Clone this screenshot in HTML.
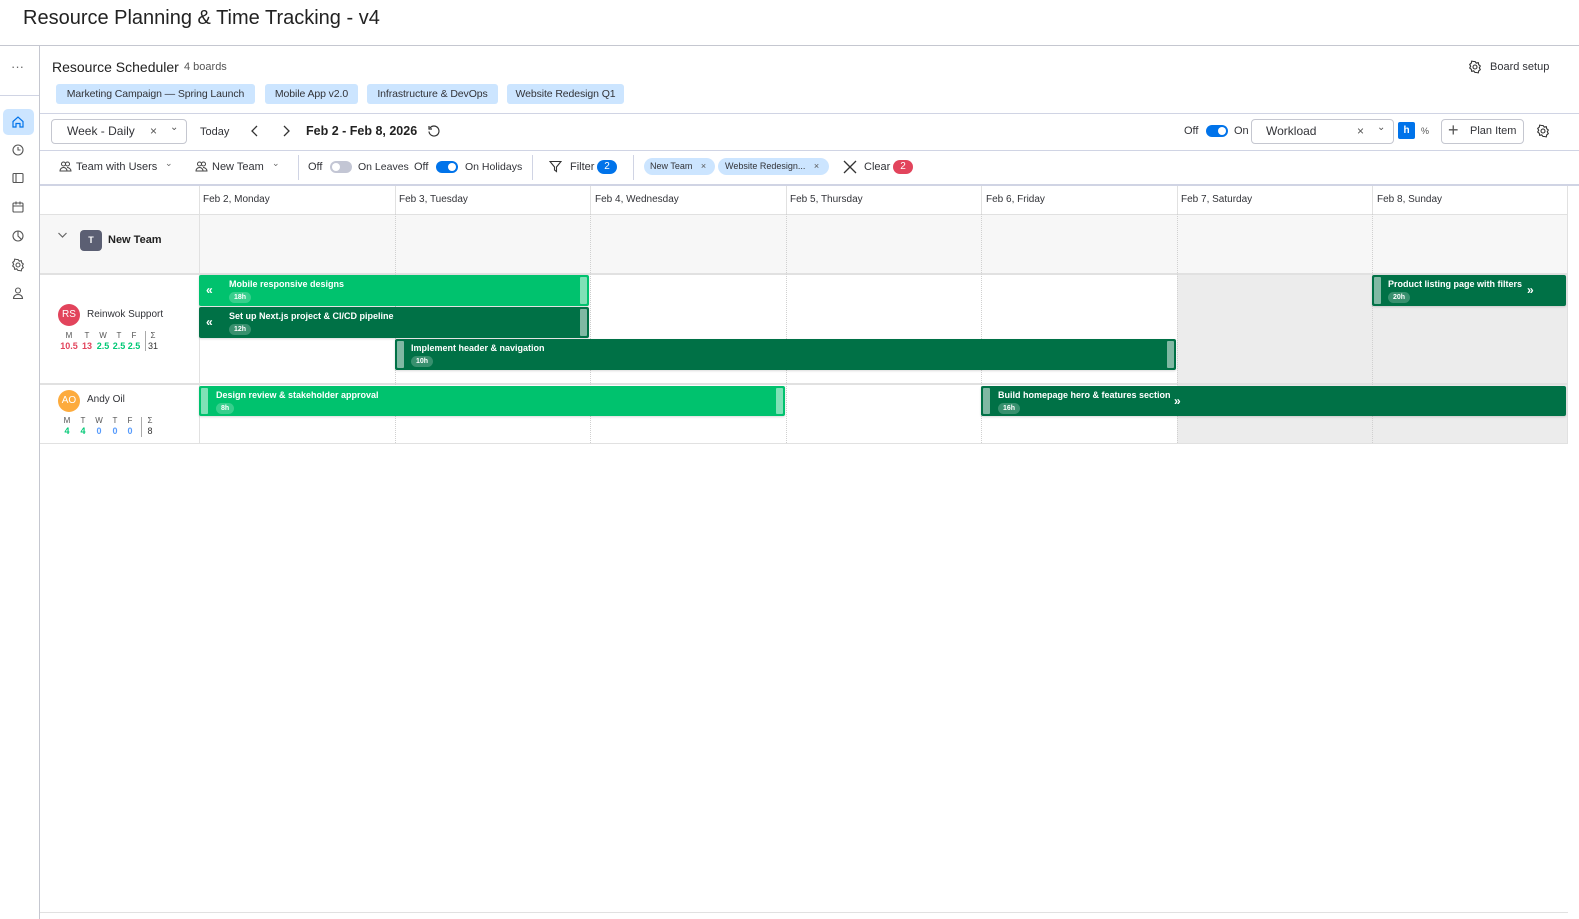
<!DOCTYPE html>
<html><head><meta charset="utf-8"><style>
*{box-sizing:border-box;margin:0;padding:0}
body{width:1579px;height:919px;position:relative;background:#fff;font-family:"Liberation Sans",sans-serif;color:#323338;overflow:hidden;font-size:12px}
.a{position:absolute;white-space:nowrap}
.chip{position:absolute;top:84px;height:20px;background:#cce5ff;border-radius:3px;font-size:10.5px;line-height:20px;padding:0 5px;color:#323338;white-space:nowrap;overflow:hidden;text-align:center;letter-spacing:-0.1px}
.hl{position:absolute;height:1px;background:#d0d4e4}
.vl{position:absolute;width:1px;background:#d0d4e4}
.dv{position:absolute;width:0;border-left:1px dotted #d0d0d0}
.bar{position:absolute;border-radius:2px;color:#fff;font-weight:bold;font-size:9px;box-shadow:0 1px 2px rgba(0,0,0,.15)}
.bar .t{position:absolute;top:4px}
.bar .h{position:absolute;top:17px;background:rgba(255,255,255,.22);border-radius:7px;font-size:7px;padding:1px 5px;line-height:9px}
.hd{position:absolute;right:2px;top:2px;bottom:2px;width:7px;background:rgba(255,255,255,.5);border-radius:1px}
.hdl{position:absolute;left:2px;top:2px;bottom:2px;width:7px;background:rgba(255,255,255,.5);border-radius:1px}
.tog{position:absolute;width:22px;height:12px;border-radius:6px}
.tog i{position:absolute;top:2px;width:8px;height:8px;border-radius:50%;background:#fff}
svg{position:absolute}
.c{position:absolute;width:20px;margin-left:-10px;text-align:center;white-space:nowrap}
</style></head><body>
<div class="a" style="left:23px;top:7px;font-size:20px;color:#222">Resource Planning &amp; Time Tracking - v4</div>
<div class="hl" style="left:0;top:45px;width:1579px;background:#c5c7d0"></div>
<div class="vl" style="left:39px;top:46px;height:873px;background:#c5c7d0"></div>
<div class="hl" style="left:0;top:95px;width:39px"></div>
<div class="a" style="left:11px;top:59px;font-size:13px;color:#666">···</div>
<div class="a" style="left:3px;top:109px;width:31px;height:26px;background:#cce5ff;border-radius:5px"></div>
<svg style="left:11px;top:115px" width="14" height="14" viewBox="0 0 14 14" fill="none" stroke="#0073ea" stroke-width="1.2"><path d="M2 6.5L7 2l5 4.5V12H9V8.5H5V12H2z"/></svg>
<svg style="left:11px;top:143px" width="14" height="14" viewBox="0 0 14 14" fill="none" stroke="#555" stroke-width="1.1"><circle cx="7" cy="7" r="5"/><path d="M7 4v3h2.5"/></svg>
<svg style="left:11px;top:171px" width="14" height="14" viewBox="0 0 14 14" fill="none" stroke="#555" stroke-width="1.1"><rect x="2" y="2.5" width="10" height="9" rx="1"/><path d="M5 2.5v9"/></svg>
<svg style="left:11px;top:200px" width="14" height="14" viewBox="0 0 14 14" fill="none" stroke="#555" stroke-width="1.1"><rect x="2" y="3" width="10" height="9" rx="1"/><path d="M2 6h10M5 1.5v3M9 1.5v3"/></svg>
<svg style="left:11px;top:229px" width="14" height="14" viewBox="0 0 14 14" fill="none" stroke="#555" stroke-width="1.1"><circle cx="7" cy="7" r="5"/><path d="M7 2v5l3.5 3.5"/></svg>
<svg style="left:11px;top:258px" width="14" height="14" viewBox="0 0 14 14" fill="none" stroke="#555" stroke-width="1.1"><circle cx="7" cy="7" r="2"/><path d="M7 1.5l1.3 1.6 2-.4.4 2 1.6 1.3-1 1.8 1 1.8-1.6 1.3-.4 2-2-.4L7 12.5l-1.3-1.6-2 .4-.4-2L1.7 8l1-1.8-1-1.8 1.6-1.3.4-2 2 .4z"/></svg>
<svg style="left:11px;top:286px" width="14" height="14" viewBox="0 0 14 14" fill="none" stroke="#555" stroke-width="1.1"><circle cx="7" cy="4.5" r="2.5"/><path d="M2.5 12.5c0-2.5 2-4 4.5-4s4.5 1.5 4.5 4z"/></svg>

<div class="a" style="left:52px;top:59px;font-size:14px;color:#222">Resource Scheduler</div>
<div class="a" style="left:184px;top:61px;font-size:11px;color:#555">4 boards</div>
<svg style="left:1468px;top:60px" width="14" height="14" viewBox="0 0 14 14" fill="none" stroke="#333" stroke-width="1.1"><circle cx="7" cy="7" r="2"/><path d="M7 1.5l1.3 1.6 2-.4.4 2 1.6 1.3-1 1.8 1 1.8-1.6 1.3-.4 2-2-.4L7 12.5l-1.3-1.6-2 .4-.4-2L1.7 8l1-1.8-1-1.8 1.6-1.3.4-2 2 .4z"/></svg>
<div class="a" style="left:1490px;top:61px;font-size:11px">Board setup</div>
<div class="chip" style="left:56px;width:199px">Marketing Campaign — Spring Launch</div>
<div class="chip" style="left:265px;width:93px">Mobile App v2.0</div>
<div class="chip" style="left:367px;width:131px">Infrastructure &amp; DevOps</div>
<div class="chip" style="left:507px;width:117px">Website Redesign Q1</div>
<div class="hl" style="left:40px;top:113px;width:1539px"></div>

<div class="a" style="left:51px;top:119px;width:136px;height:25px;border:1px solid #c5c7d0;border-radius:4px"></div>
<div class="a" style="left:67px;top:124px;font-size:12px">Week - Daily</div>
<div class="a" style="left:150px;top:124px;font-size:12px;color:#555">×</div>
<div class="a" style="left:170px;top:122px;font-size:10px;color:#555">⌄</div>
<div class="a" style="left:200px;top:126px;font-size:11px">Today</div>
<svg style="left:250px;top:124px" width="10" height="14" viewBox="0 0 10 14" fill="none" stroke="#333" stroke-width="1.3"><path d="M7 2L2 7l5 5"/></svg>
<svg style="left:281px;top:124px" width="10" height="14" viewBox="0 0 10 14" fill="none" stroke="#333" stroke-width="1.3"><path d="M3 2l5 5-5 5"/></svg>
<div class="a" style="left:306px;top:124px;font-size:12.5px;font-weight:bold;color:#222">Feb 2 - Feb 8, 2026</div>
<svg style="left:427px;top:124px" width="14" height="14" viewBox="0 0 14 14" fill="none" stroke="#333" stroke-width="1.2"><path d="M3 4A5 5 0 1 1 2 7.5"/><path d="M2 2v3h3"/></svg>

<div class="a" style="left:1184px;top:125px;font-size:11px">Off</div>
<div class="tog" style="left:1206px;top:125px;background:#0073ea"><i style="right:2px"></i></div>
<div class="a" style="left:1234px;top:125px;font-size:11px">On</div>
<div class="a" style="left:1251px;top:119px;width:143px;height:25px;border:1px solid #c5c7d0;border-radius:4px"></div>
<div class="a" style="left:1266px;top:124px;font-size:12px">Workload</div>
<div class="a" style="left:1357px;top:124px;font-size:12px;color:#555">×</div>
<div class="a" style="left:1377px;top:122px;font-size:10px;color:#555">⌄</div>
<div class="a" style="left:1398px;top:122px;width:17px;height:17px;background:#0073ea;border-radius:2px;color:#fff;font-weight:bold;font-size:10px;text-align:center;line-height:17px">h</div>
<div class="a" style="left:1421px;top:126px;font-size:9px;color:#555">%</div>
<div class="a" style="left:1441px;top:119px;width:83px;height:25px;border:1px solid #c5c7d0;border-radius:4px"></div>
<div class="a" style="left:1448px;top:120px;font-size:18px;color:#555;font-weight:300">+</div>
<div class="a" style="left:1470px;top:125px;font-size:11px">Plan Item</div>
<svg style="left:1536px;top:124px" width="14" height="14" viewBox="0 0 14 14" fill="none" stroke="#333" stroke-width="1.1"><circle cx="7" cy="7" r="2"/><path d="M7 1.5l1.3 1.6 2-.4.4 2 1.6 1.3-1 1.8 1 1.8-1.6 1.3-.4 2-2-.4L7 12.5l-1.3-1.6-2 .4-.4-2L1.7 8l1-1.8-1-1.8 1.6-1.3.4-2 2 .4z"/></svg>
<div class="hl" style="left:40px;top:150px;width:1539px"></div>

<svg style="left:59px;top:160px" width="13" height="13" viewBox="0 0 13 13" fill="none" stroke="#444" stroke-width="1"><circle cx="4.5" cy="4" r="2"/><circle cx="8.5" cy="4" r="2"/><path d="M1 11c0-2 1.5-3.5 3.5-3.5S8 9 8 11zM8 7.5c2 0 4 1.5 4 3.5H8"/></svg>
<div class="a" style="left:76px;top:161px;font-size:11px">Team with Users</div>
<div class="a" style="left:165px;top:158px;font-size:9px;color:#666">⌄</div>
<svg style="left:195px;top:160px" width="13" height="13" viewBox="0 0 13 13" fill="none" stroke="#444" stroke-width="1"><circle cx="4.5" cy="4" r="2"/><circle cx="8.5" cy="4" r="2"/><path d="M1 11c0-2 1.5-3.5 3.5-3.5S8 9 8 11zM8 7.5c2 0 4 1.5 4 3.5H8"/></svg>
<div class="a" style="left:212px;top:161px;font-size:11px">New Team</div>
<div class="a" style="left:272px;top:158px;font-size:9px;color:#666">⌄</div>
<div class="vl" style="left:298px;top:155px;height:25px"></div>
<div class="a" style="left:308px;top:161px;font-size:11px">Off</div>
<div class="tog" style="left:330px;top:161px;background:#c3c6d4"><i style="left:2px"></i></div>
<div class="a" style="left:358px;top:161px;font-size:10.5px">On Leaves</div>
<div class="a" style="left:414px;top:161px;font-size:11px">Off</div>
<div class="tog" style="left:436px;top:161px;background:#0073ea"><i style="right:2px"></i></div>
<div class="a" style="left:465px;top:161px;font-size:10.5px">On Holidays</div>
<div class="vl" style="left:532px;top:155px;height:25px"></div>
<svg style="left:549px;top:160px" width="13" height="13" viewBox="0 0 13 13" fill="none" stroke="#333" stroke-width="1.1"><path d="M1 1.5h11L7.5 7v4.5L5.5 10V7z"/></svg>
<div class="a" style="left:570px;top:161px;font-size:11px">Filter</div>
<div class="a" style="left:597px;top:160px;width:20px;height:14px;border-radius:7px;background:#0073ea;color:#fff;font-size:10px;text-align:center;line-height:14px">2</div>
<div class="vl" style="left:633px;top:155px;height:25px"></div>
<div class="a" style="left:644px;top:158px;width:71px;height:17px;border-radius:9px;background:#cce5ff;font-size:9px;line-height:17px;padding-left:6px">New Team <span style="margin-left:6px;color:#555">×</span></div>
<div class="a" style="left:718px;top:158px;width:111px;height:17px;border-radius:9px;background:#cce5ff;font-size:9px;line-height:17px;padding-left:7px">Website Redesign... <span style="margin-left:6px;color:#555">×</span></div>
<svg style="left:843px;top:160px" width="14" height="14" viewBox="0 0 14 14" stroke="#333" stroke-width="1.3"><path d="M1 1l12 12M13 1L1 13"/></svg>
<div class="a" style="left:864px;top:161px;font-size:11px">Clear</div>
<div class="a" style="left:893px;top:160px;width:20px;height:14px;border-radius:7px;background:#e2445c;color:#fff;font-size:10px;text-align:center;line-height:14px">2</div>

<!-- grid -->
<div class="hl" style="left:40px;top:184px;width:1539px;height:2px;background:#d0d4e4"></div>
<div class="a" style="left:40px;top:214px;width:1528px;height:59px;background:#f7f7f7"></div>
<div class="a" style="left:1177px;top:273px;width:391px;height:170px;background:#ececec"></div>
<div class="hl" style="left:40px;top:214px;width:1528px;background:#e1e1e1"></div>
<div class="hl" style="left:40px;top:273px;width:1528px;height:2px;background:#e1e1e1"></div>
<div class="hl" style="left:40px;top:383px;width:1528px;height:2px;background:#e1e1e1"></div>
<div class="hl" style="left:40px;top:443px;width:1528px;height:1px;background:#e1e1e1"></div>
<div class="vl" style="left:199px;top:186px;height:257px;background:#e1e1e1"></div>
<div class="vl" style="left:395px;top:186px;height:28px;background:#e1e1e1"></div>
<div class="vl" style="left:590px;top:186px;height:28px;background:#e1e1e1"></div>
<div class="vl" style="left:786px;top:186px;height:28px;background:#e1e1e1"></div>
<div class="vl" style="left:981px;top:186px;height:28px;background:#e1e1e1"></div>
<div class="vl" style="left:1177px;top:186px;height:28px;background:#e1e1e1"></div>
<div class="vl" style="left:1372px;top:186px;height:28px;background:#e1e1e1"></div>
<div class="vl" style="left:1567px;top:186px;height:258px;background:#e1e1e1"></div>
<div class="dv" style="left:395px;top:214px;height:229px"></div>
<div class="dv" style="left:590px;top:214px;height:229px"></div>
<div class="dv" style="left:786px;top:214px;height:229px"></div>
<div class="dv" style="left:981px;top:214px;height:229px"></div>
<div class="dv" style="left:1177px;top:214px;height:229px"></div>
<div class="dv" style="left:1372px;top:214px;height:229px"></div>
<div class="a" style="left:203px;top:194px;font-size:10px">Feb 2, Monday</div>
<div class="a" style="left:399px;top:194px;font-size:10px">Feb 3, Tuesday</div>
<div class="a" style="left:595px;top:194px;font-size:10px">Feb 4, Wednesday</div>
<div class="a" style="left:790px;top:194px;font-size:10px">Feb 5, Thursday</div>
<div class="a" style="left:986px;top:194px;font-size:10px">Feb 6, Friday</div>
<div class="a" style="left:1181px;top:194px;font-size:10px">Feb 7, Saturday</div>
<div class="a" style="left:1377px;top:194px;font-size:10px">Feb 8, Sunday</div>

<svg style="left:57px;top:231px" width="11" height="8" viewBox="0 0 11 8" fill="none" stroke="#666" stroke-width="1.2"><path d="M1.5 2l4 4 4-4"/></svg>
<div class="a" style="left:80px;top:230px;width:22px;height:21px;border-radius:4px;background:#5b5f73;color:#fff;font-size:9px;font-weight:bold;text-align:center;line-height:21px">T</div>
<div class="a" style="left:108px;top:234px;font-size:11px;font-weight:bold;color:#222">New Team</div>

<div class="a" style="left:58px;top:304px;width:22px;height:22px;border-radius:50%;background:#e2445c;color:#fff;font-size:10px;text-align:center;line-height:22px">RS</div>
<div class="a" style="left:87px;top:309px;font-size:10px">Reinwok Support</div>
<div style="position:absolute;top:331px;font-size:8px;color:#555;left:0">
<span class="c" style="left:69px">M</span><span class="c" style="left:87px">T</span><span class="c" style="left:103px">W</span><span class="c" style="left:119px">T</span><span class="c" style="left:134px">F</span><span class="c" style="left:153px">Σ</span></div>
<div style="position:absolute;top:341px;font-size:9px;font-weight:bold;left:0">
<span class="c" style="left:69px;color:#e2445c">10.5</span><span class="c" style="left:87px;color:#e2445c">13</span><span class="c" style="left:103px;color:#00c875">2.5</span><span class="c" style="left:119px;color:#00c875">2.5</span><span class="c" style="left:134px;color:#00c875">2.5</span><span class="c" style="left:153px;color:#333;font-weight:normal">31</span></div>
<div class="vl" style="left:145px;top:331px;height:20px;background:#aaa"></div>

<div class="a" style="left:58px;top:390px;width:22px;height:22px;border-radius:50%;background:#fdab3d;color:#fff;font-size:10px;text-align:center;line-height:22px">AO</div>
<div class="a" style="left:87px;top:394px;font-size:10px">Andy Oil</div>
<div style="position:absolute;top:416px;font-size:8px;color:#555;left:0">
<span class="c" style="left:67px">M</span><span class="c" style="left:83px">T</span><span class="c" style="left:99px">W</span><span class="c" style="left:115px">T</span><span class="c" style="left:130px">F</span><span class="c" style="left:150px">Σ</span></div>
<div style="position:absolute;top:426px;font-size:9px;font-weight:bold;left:0">
<span class="c" style="left:67px;color:#00c875">4</span><span class="c" style="left:83px;color:#00c875">4</span><span class="c" style="left:99px;color:#579bfc">0</span><span class="c" style="left:115px;color:#579bfc">0</span><span class="c" style="left:130px;color:#579bfc">0</span><span class="c" style="left:150px;color:#333;font-weight:normal">8</span></div>
<div class="vl" style="left:141px;top:417px;height:20px;background:#aaa"></div>

<div class="bar" style="left:199px;top:275px;width:390px;height:31px;background:#00c26e"><span class="t" style="left:7px;top:8px;font-size:12px">«</span><span class="t" style="left:30px">Mobile responsive designs</span><span class="h" style="left:30px">18h</span><div class="hd"></div></div>
<div class="bar" style="left:199px;top:307px;width:390px;height:31px;background:#007146"><span class="t" style="left:7px;top:8px;font-size:12px">«</span><span class="t" style="left:30px">Set up Next.js project &amp; CI/CD pipeline</span><span class="h" style="left:30px">12h</span><div class="hd"></div></div>
<div class="bar" style="left:395px;top:339px;width:781px;height:31px;background:#007146"><div class="hdl"></div><span class="t" style="left:16px">Implement header &amp; navigation</span><span class="h" style="left:16px">10h</span><div class="hd"></div></div>
<div class="bar" style="left:1372px;top:275px;width:194px;height:31px;background:#007146"><div class="hdl"></div><span class="t" style="left:16px">Product listing page with filters</span><span class="h" style="left:16px">20h</span><span class="t" style="left:155px;top:8px;font-size:12px">»</span></div>
<div class="bar" style="left:199px;top:386px;width:586px;height:30px;background:#00c26e"><div class="hdl"></div><span class="t" style="left:17px">Design review &amp; stakeholder approval</span><span class="h" style="left:17px">8h</span><div class="hd"></div></div>
<div class="bar" style="left:981px;top:386px;width:585px;height:30px;background:#007146"><div class="hdl"></div><span class="t" style="left:17px">Build homepage hero &amp; features section</span><span class="h" style="left:17px">16h</span><span class="t" style="left:193px;top:8px;font-size:12px">»</span></div>

<div class="hl" style="left:40px;top:912px;width:1528px;background:#e1e1e1"></div>
</body></html>
